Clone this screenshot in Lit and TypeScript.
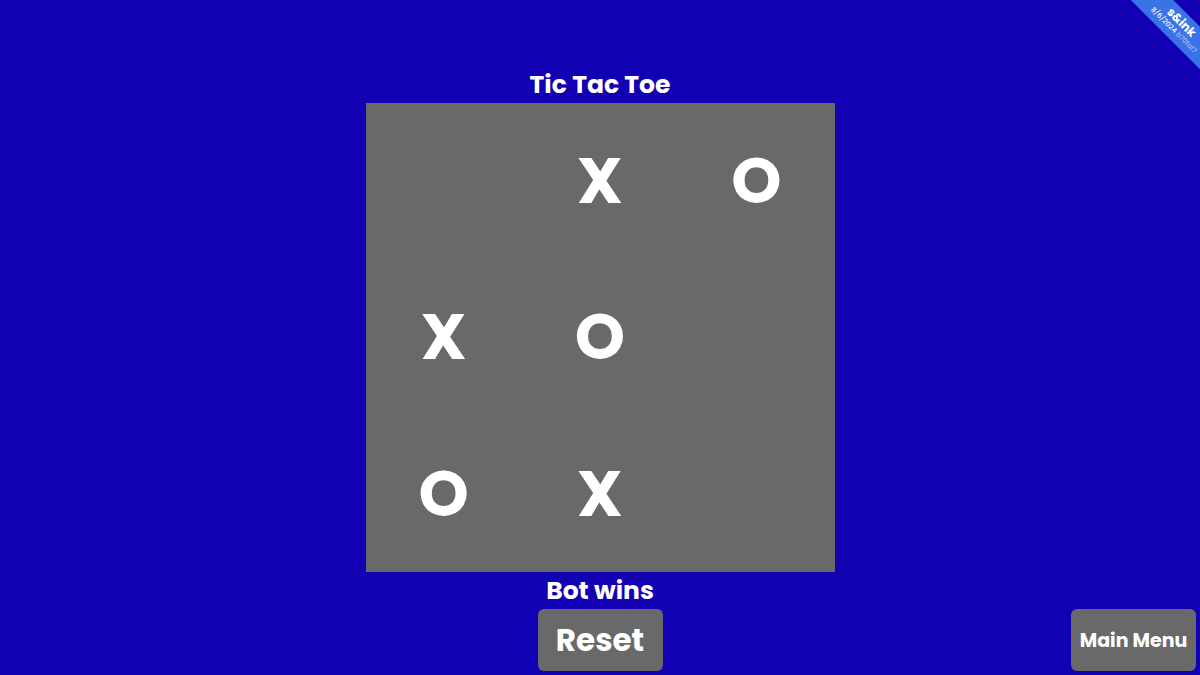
import { LitElement, html, css } from "lit";
import { customElement, state } from "lit/decorators.js";

type Mark = "X" | "O" | "";

@customElement("app-root")
export class AppRoot extends LitElement {
  static styles = css`
    :host {
      display: block;
      font-family: Poppins, Inter, sans-serif;
      font-weight: 700;
      color: #fff;
    }
    .page {
      position: relative;
      box-sizing: border-box;
      min-height: 100vh;
      padding: 4px;
      display: flex;
      flex-direction: column;
      justify-content: flex-end;
      overflow: hidden;
      background: #1200b3;
    }
    .heading,
    .status {
      margin: 0;
      font-size: 25px;
      line-height: 37px;
      font-weight: 700;
      text-align: center;
    }
    .board {
      align-self: center;
      width: min(469px, 100%);
      aspect-ratio: 1;
      display: grid;
      grid-template: repeat(3, 1fr) / repeat(3, 1fr);
      background: #696969;
    }
    button {
      padding: 0;
      border: 0;
      font: inherit;
      color: inherit;
      background: #696969;
      cursor: pointer;
    }
    .cell {
      font-size: 64px;
      line-height: 1;
    }
    .actions {
      display: grid;
      grid-template-columns: 1fr auto 1fr;
    }
    .action {
      width: 125px;
      height: 62px;
      border-radius: 6px;
    }
    .reset {
      grid-column: 2;
      font-size: 31px;
    }
    .menu {
      justify-self: end;
      font-size: 19px;
    }
    .corner {
      position: absolute;
      top: 0;
      right: 0;
      width: 72px;
      height: 72px;
      overflow: hidden;
      pointer-events: none;
    }
    .ribbon {
      position: absolute;
      top: 11px;
      left: -10px;
      box-sizing: border-box;
      width: 120px;
      height: 30px;
      padding-bottom: 2px;
      display: flex;
      flex-direction: column;
      align-items: center;
      justify-content: center;
      transform: rotate(45deg);
      background: #3973e6;
    }
    .brand {
      font-size: 12px;
      line-height: 12px;
    }
    .build {
      font-size: 7px;
      line-height: 9px;
      font-weight: 500;
      white-space: nowrap;
    }
    .hash {
      opacity: 0.5;
    }
  `;

  @state() private cells: Mark[] = ["", "X", "O", "X", "O", "", "O", "X", ""];
  @state() private status = "Bot wins";

  private reset() {
    this.cells = Array<Mark>(9).fill("");
    this.status = "";
  }

  render() {
    return html`
      <main class="page">
        <h1 class="heading">Tic Tac Toe</h1>
        <div class="board">
          ${this.cells.map(
            (mark, i) =>
              html`<button class="cell" aria-label="Cell ${i + 1} ${mark}">${mark}</button>`
          )}
        </div>
        <p class="status" role="status">${this.status}</p>
        <div class="actions">
          <button class="action reset" @click=${this.reset}>Reset</button>
          <button class="action menu">Main Menu</button>
        </div>
        <div class="corner">
          <div class="ribbon">
            <span class="brand">s&amp;ink</span>
            <span class="build">8/6/2024 <span class="hash">b70faf7</span></span>
          </div>
        </div>
      </main>
    `;
  }
}
